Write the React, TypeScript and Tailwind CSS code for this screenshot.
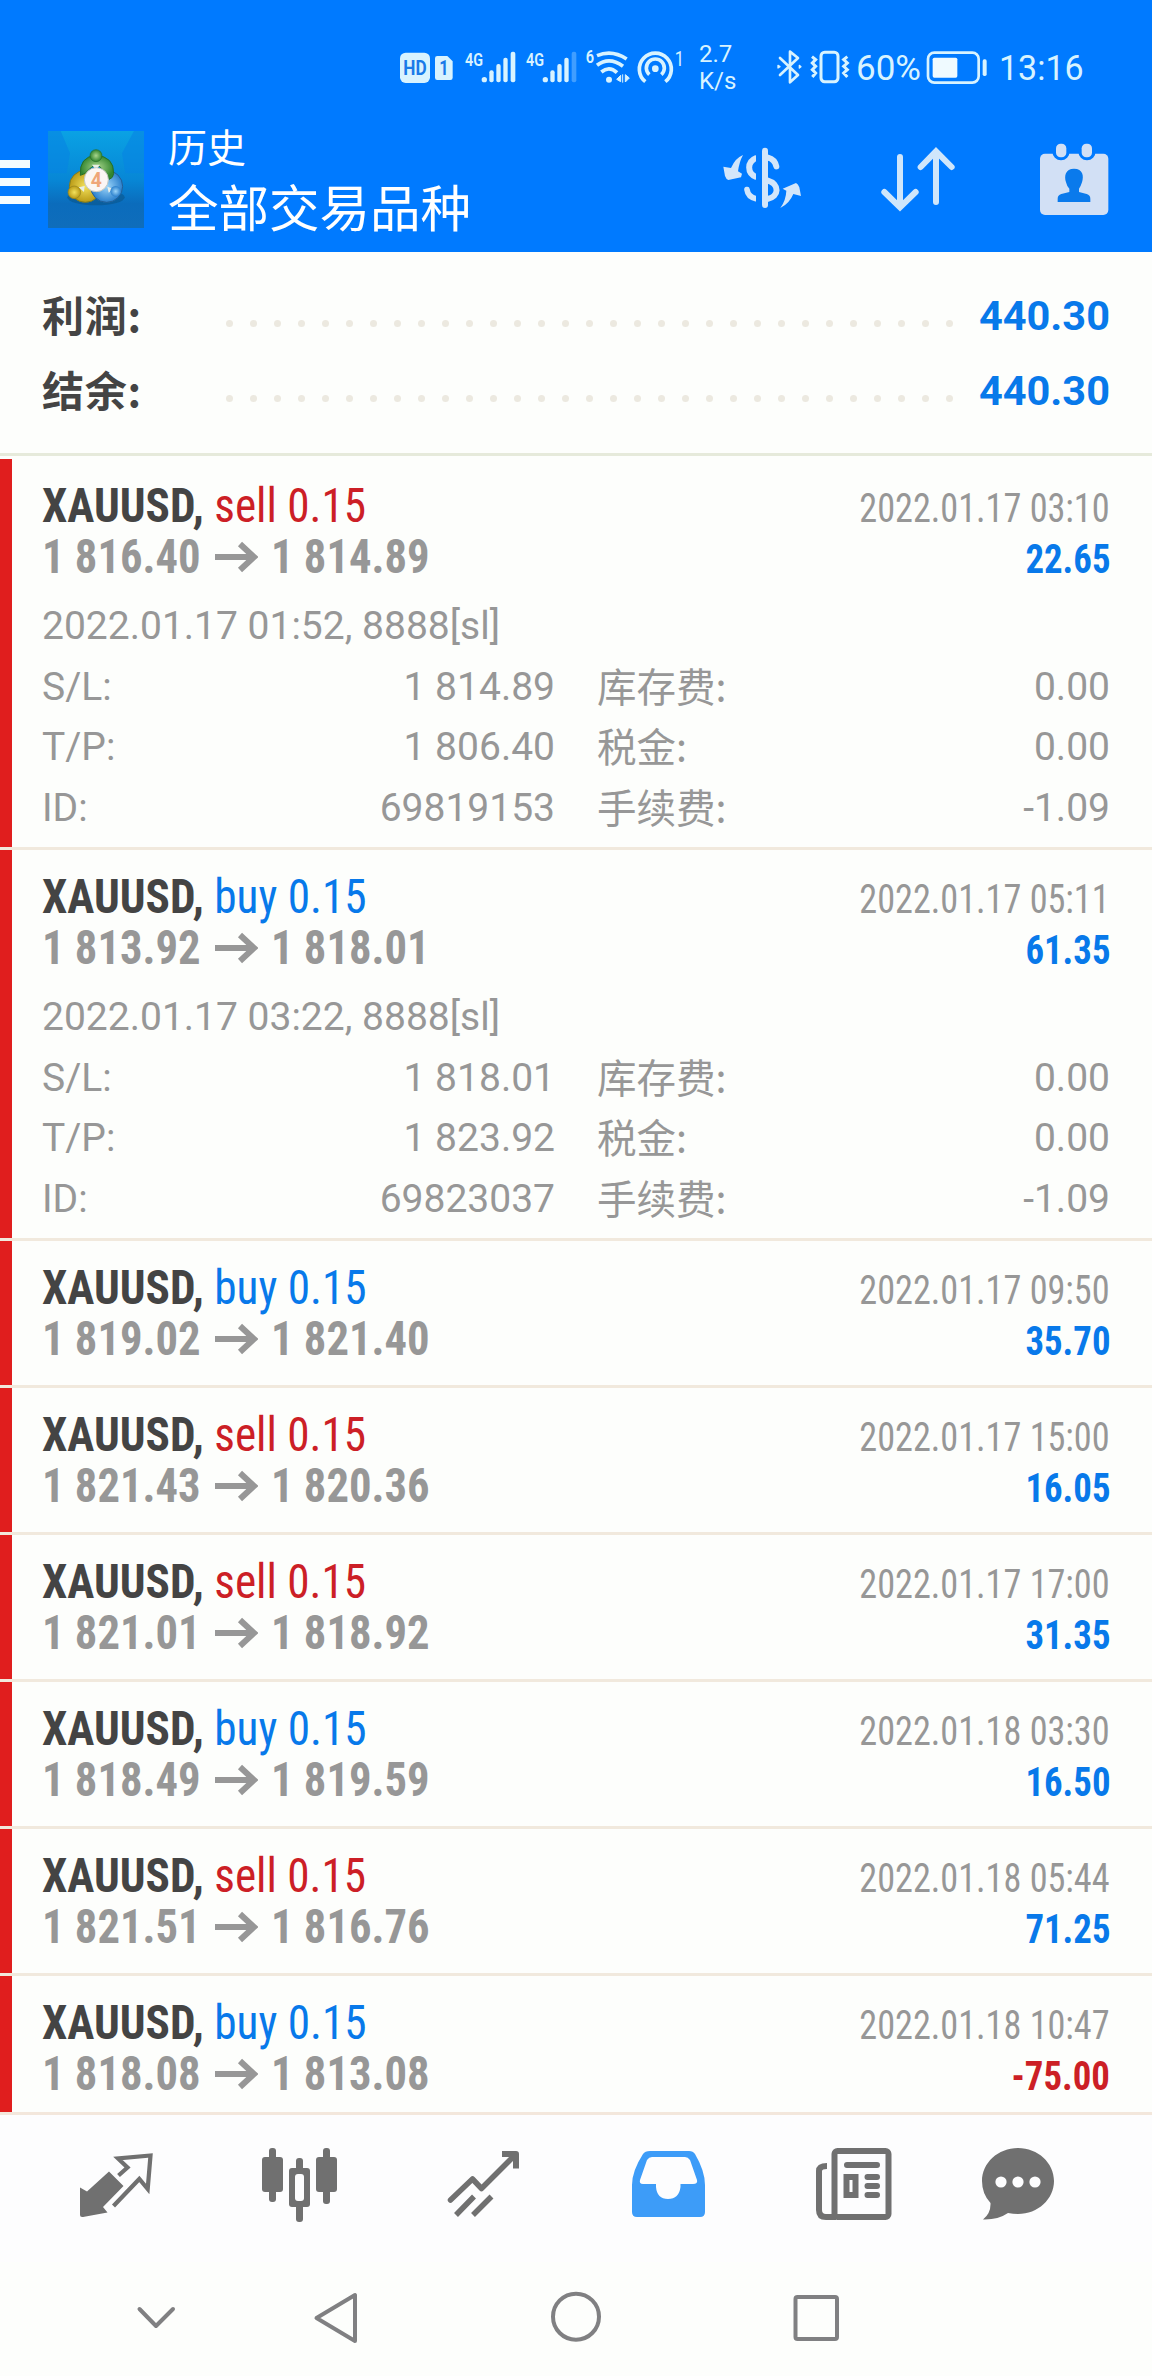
import React from "react";

type Detail = { opened: string; sl: string; tp: string; id: string; swap: string; tax: string; fee: string };
type Deal = { side: "buy" | "sell"; from: string; to: string; time: string; profit: string; detail?: Detail };

const deals: Deal[] = [
  {
    side: "sell", from: "1 816.40", to: "1 814.89", time: "2022.01.17 03:10", profit: "22.65",
    detail: { opened: "2022.01.17 01:52, 8888[sl]", sl: "1 814.89", tp: "1 806.40", id: "69819153", swap: "0.00", tax: "0.00", fee: "-1.09" },
  },
  {
    side: "buy", from: "1 813.92", to: "1 818.01", time: "2022.01.17 05:11", profit: "61.35",
    detail: { opened: "2022.01.17 03:22, 8888[sl]", sl: "1 818.01", tp: "1 823.92", id: "69823037", swap: "0.00", tax: "0.00", fee: "-1.09" },
  },
  { side: "buy", from: "1 819.02", to: "1 821.40", time: "2022.01.17 09:50", profit: "35.70" },
  { side: "sell", from: "1 821.43", to: "1 820.36", time: "2022.01.17 15:00", profit: "16.05" },
  { side: "sell", from: "1 821.01", to: "1 818.92", time: "2022.01.17 17:00", profit: "31.35" },
  { side: "buy", from: "1 818.49", to: "1 819.59", time: "2022.01.18 03:30", profit: "16.50" },
  { side: "sell", from: "1 821.51", to: "1 816.76", time: "2022.01.18 05:44", profit: "71.25" },
  { side: "buy", from: "1 818.08", to: "1 813.08", time: "2022.01.18 10:47", profit: "-75.00" },
];

function Signal({ dim }: { dim?: boolean }) {
  return (
    <svg className="h-20 w-[54px]" viewBox="250 0 162 240" fill="#d8f3ff">
      <text x="256" y="107" fontSize="56" fontWeight="600" textLength="54" lengthAdjust="spacingAndGlyphs">4G</text>
      <circle cx="314" cy="149" r="8" />
      <rect x="329" y="121" width="13" height="36" rx="6" />
      <rect x="350" y="102" width="13" height="55" rx="6" />
      <rect x="371" y="83" width="13" height="74" rx="6" />
      <rect x="393" y="65" width="14" height="92" rx="6" opacity={dim ? 0.3 : 1} />
    </svg>
  );
}

function StatusBar() {
  return (
    <div className="flex h-20 items-start pl-[398px] text-[#d8f3ff]">
      <svg className="h-20 w-[57px]" viewBox="54 0 171 240" fill="#d8f3ff">
        <rect x="60" y="68" width="90" height="91" rx="17" />
        <text x="70" y="134" fontSize="58" fontWeight="700" fill="#1a7ae8" textLength="70" lengthAdjust="spacingAndGlyphs">HD</text>
        <path d="M172 78H202L218 94V143Q218 150 211 150H172Q165 150 165 143V85Q165 78 172 78Z" />
        <text x="178" y="135" fontSize="58" fontWeight="700" fill="#1a7ae8" textLength="28" lengthAdjust="spacingAndGlyphs">1</text>
      </svg>
      <div className="w-[8px]" />
      <Signal />
      <div className="w-[7px]" />
      <Signal dim />
      <div className="w-[6px]" />
      <svg className="h-20 w-[48px]" viewBox="612 0 144 240" fill="none" stroke="#d8f3ff" strokeWidth="11">
        <text x="617" y="98" fontSize="54" fontWeight="600" fill="#d8f3ff" stroke="none" textLength="25" lengthAdjust="spacingAndGlyphs">6</text>
        <path d="M651 77Q696 58 740 87" strokeLinecap="butt" />
        <path d="M651 106Q688 78 729 109" />
        <path d="M664 126Q688 106 711 128" />
        <circle cx="687" cy="149" r="9" fill="#d8f3ff" stroke="none" />
        <path d="M710 148L722 136V155ZM748 144L736 134V156Z M728 133V158" fill="#d8f3ff" strokeWidth="3" />
      </svg>
      <div className="w-[2px]" />
      <svg className="h-20 w-[52px]" viewBox="762 0 156 240" fill="none" stroke="#d8f3ff" strokeWidth="11">
        <path d="M796 155A48 48 0 1 1 856 155" />
        <path d="M808 134A27 27 0 1 1 844 134" />
        <circle cx="826" cy="116" r="10" fill="#d8f3ff" stroke="none" />
        <text x="884" y="107" fontSize="58" fill="#d8f3ff" stroke="none" textLength="28" lengthAdjust="spacingAndGlyphs">1</text>
      </svg>
      <div className="ml-[13px] w-[62px] pt-[11px] text-[24px] leading-[27px]">
        <div>2.7</div>
        <div>K/s</div>
      </div>
      <svg className="ml-[15px] h-20 w-[28px]" viewBox="50 0 84 240" fill="none" stroke="#d8f3ff" strokeWidth="8" strokeLinejoin="round" strokeLinecap="round">
        <path d="M62 84L116 135L92 157V65L116 84L62 135" />
        <path d="M56 106L62 110L56 114ZM120 106L125 110L120 114Z" strokeWidth="4" />
      </svg>
      <svg className="ml-[5px] h-20 w-[42px]" viewBox="148 0 126 240" fill="none" stroke="#d8f3ff" strokeWidth="9">
        <rect x="184" y="67" width="51" height="88" rx="11" />
        <path d="M157 80L168 89L158 99L168 109L158 119L168 129L158 141M263 80L252 89L263 99L252 109L263 119L252 129L263 141" strokeWidth="9" />
      </svg>
      <div className="ml-[5px] mt-[18px] w-[67px] text-[35px] leading-[42px]">60%</div>
      <svg className="ml-[3px] h-20 w-[64px]" viewBox="500 0 192 240" fill="none" stroke="#d8f3ff" strokeWidth="8">
        <rect x="506" y="68" width="152" height="90" rx="19" />
        <rect x="520" y="83" width="74" height="60" rx="5" fill="#effaff" stroke="none" />
        <rect x="670" y="88" width="12" height="50" rx="5" fill="#d8f3ff" stroke="none" />
      </svg>
      <div className="ml-[9px] mt-[18px] origin-left scale-x-[0.97] text-[35px] leading-[42px]">13:16</div>
    </div>
  );
}

function Logo() {
  return (
    <svg className="ml-[18px] mt-[21px] h-[97px] w-24" viewBox="144 63 288 291">
      <defs>
        <linearGradient id="tile" x1="0" y1="0" x2="0" y2="1">
          <stop offset="0" stopColor="#0aa2e4" />
          <stop offset="0.5" stopColor="#0787d6" />
          <stop offset="0.75" stopColor="#0b6cbc" />
          <stop offset="1" stopColor="#0f6dbb" />
        </linearGradient>
        <radialGradient id="green"><stop offset="0" stopColor="#a9d68d" /><stop offset="1" stopColor="#32852f" /></radialGradient>
        <radialGradient id="gold"><stop offset="0" stopColor="#f3e15c" /><stop offset="1" stopColor="#b99a16" /></radialGradient>
        <radialGradient id="blue"><stop offset="0" stopColor="#9bd5fa" /><stop offset="1" stopColor="#2a7fcc" /></radialGradient>
      </defs>
      <rect x="144" y="63" width="288" height="291" fill="url(#tile)" />
      <path d="M144 63H182L210 130L200 190H144ZM432 63H402L366 130L376 190H432Z" fill="#0784e2" opacity="0.6" />
      <ellipse cx="288" cy="262" rx="86" ry="24" fill="#0a4f80" opacity="0.5" />
      <circle cx="256" cy="229" r="48" fill="url(#gold)" stroke="#7e7a20" strokeWidth="3" />
      <circle cx="320" cy="229" r="48" fill="url(#blue)" stroke="#215f98" strokeWidth="3" />
      <path d="M241 196Q237 140 288 136Q342 140 341 190Q340 204 328 208L300 170H276L256 190Z" fill="url(#green)" stroke="#25702b" strokeWidth="3" />
      <path d="M276 164H300L288 180ZM236 232L254 228L252 246ZM322 230L340 236L326 248Z" fill="#e8efe8" />
      <circle cx="288" cy="137" r="18" fill="url(#green)" stroke="#276f2b" strokeWidth="2" />
      <circle cx="223" cy="247" r="19" fill="url(#gold)" stroke="#94821c" strokeWidth="2" />
      <circle cx="347" cy="244" r="16" fill="url(#blue)" />
      <circle cx="289" cy="209" r="36" fill="#fbf6f4" stroke="#c3c8c4" strokeWidth="3" />
      <text x="289" y="230" textAnchor="middle" fontSize="58" fontWeight="700" fill="#efa678">4</text>
    </svg>
  );
}

function Header() {
  return (
    <header className="h-[252px] bg-[#007aff] pt-[30px]">
      <StatusBar />
      <div className="flex h-[142px]">
        <div className="flex w-[30px] flex-col gap-[10px] pt-[50px]">
          <div className="h-2 bg-[#f4fcff]" />
          <div className="h-2 bg-[#f4fcff]" />
          <div className="h-2 bg-[#f4fcff]" />
        </div>
        <Logo />
        <div className="ml-[24px] w-[552px] text-white">
          <div className="mt-[15px] text-[39px] leading-[48px]">历史</div>
          <div className="mt-[7px] text-[50.5px] leading-[60px]">全部交易品种</div>
        </div>
        <svg className="mt-[30px] h-[75px] w-[84px]" viewBox="120 90 252 225" fill="#d3e6fa">
          <path d="M189 135Q166 144 153 174L130 170L135 198Q138 207 145 210L183 202L186 191L174 184Q178 155 189 135Z" />
          <path d="M301 294Q328 281 340 252L363 258L358 232Q354 222 348 219L308 236L319 242Q318 270 301 294Z" />
          <g fill="none" stroke="#d3e6fa" strokeWidth="18">
            <path d="M230 143C200 155 200 190 230 202" />
            <path d="M201 239Q204 261 228 266" strokeLinecap="round" strokeWidth="17" />
            <path d="M264 143Q284 148 289 169" strokeLinecap="round" />
            <path d="M262 211C300 222 298 261 262 267" />
          </g>
          <path d="M228 128H246V280H228Z" fill="#007aff" />
          <rect x="246" y="113" width="18" height="181" rx="9" />
        </svg>
        <svg className="ml-[72px] mt-[30px] h-[75px] w-[84px]" viewBox="588 90 252 225" fill="none" stroke="#cfe6fb" strokeWidth="18" strokeLinecap="round">
          <path d="M660 141V290M613 246L660 292L707 246" />
          <path d="M768 276V126M722 171L768 124L815 171" />
        </svg>
        <svg className="ml-[72px] mt-[30px] h-[78px] w-[84px]" viewBox="1056 90 252 234" fill="#d2e0f5">
          <rect x="1080" y="131" width="205" height="184" rx="15" />
          <ellipse cx="1143" cy="124" rx="26" ry="27" fill="#007aff" />
          <ellipse cx="1221" cy="124" rx="26" ry="27" fill="#007aff" />
          <rect x="1128" y="101" width="31" height="41" rx="14" />
          <rect x="1205" y="101" width="31" height="41" rx="14" />
          <path d="M1182 176C1209 176 1212 198 1206 217Q1202 230 1197 236V246L1220 252Q1231 256 1231 266V276H1133V266Q1133 256 1144 252L1168 246V236Q1161 230 1158 217C1152 198 1156 176 1182 176Z" fill="#0a7aec" />
        </svg>
      </div>
    </header>
  );
}

function SummaryRow({ label, value }: { label: string; value: string }) {
  return (
    <div className="flex h-[75px] items-start pl-[42px] pr-[42px] text-[41.5px] font-bold leading-[75px]">
      <div className="w-[184px] font-['Noto_Sans_CJK_SC',sans-serif] text-[42px] leading-[71px] tracking-[0.7px] text-[#444]">{label}</div>
      <div className="flex gap-[17px] pt-[42px]">
        {Array.from({ length: 31 }, (_, i) => (
          <div key={i} className="size-[7px] rounded-full bg-[#ece9e0]" />
        ))}
      </div>
      <div className="ml-auto text-[#0879ea]">{value}</div>
    </div>
  );
}

function DetailLine({ a, av, b, bv }: { a: string; av: string; b: string; bv: string }) {
  return (
    <div className="flex h-[60.67px]">
      <div className="w-[200px]">{a}</div>
      <div className="w-[313px] text-right">{av}</div>
      <div className="ml-[42px] grow font-['Noto_Sans_CJK_SC',sans-serif] text-[39.5px] leading-[56px]">{b}</div>
      <div>{bv}</div>
    </div>
  );
}

function DealRow({ deal, last }: { deal: Deal; last: boolean }) {
  const d = deal.detail;
  return (
    <div className={last ? "flex h-[136px] overflow-hidden" : d ? "flex h-[391px] border-b-[3px] border-[#f1e9dd]" : "flex h-[147px] border-b-[3px] border-[#f1e9dd]"}>
      <div className="w-3 shrink-0 bg-[#e01e1e]" />
      <div className="grow pl-[30px] pr-[42px] pt-[21px]">
        <div className="font-['Roboto_Condensed',Roboto,sans-serif] [font-stretch:75%]">
          <div className="flex h-[51px] items-baseline justify-between text-[48px] leading-[51px]">
            <div className="origin-left scale-x-[0.942] whitespace-pre">
              <span className="font-bold text-[#444]">XAUUSD, </span>
              <span className={deal.side === "buy" ? "text-[#0879ea]" : "text-[#cc1f26]"}>{deal.side} 0.15</span>
            </div>
            <div className="origin-right scale-x-[0.905] text-[40px] text-[#979797]">{deal.time}</div>
          </div>
          <div className="flex h-[51px] items-baseline justify-between text-[48px] font-bold leading-[51px] text-[#979797]">
            <div className="flex items-baseline">
              <div className="w-[172px] whitespace-nowrap"><div className="origin-left scale-x-[0.93]">{deal.from}</div></div>
              <svg className="h-[32px] w-[44px]" viewBox="0 0 44 32" fill="none" stroke="#979797" strokeWidth="6">
                <path d="M1 16H40M26 3L40 16L26 29" />
              </svg>
              <div className="ml-[12.5px] origin-left scale-x-[0.93]">{deal.to}</div>
            </div>
            <div className={deal.profit.startsWith("-") ? "origin-right scale-x-[0.92] text-[40px] text-[#cc1f26]" : "origin-right scale-x-[0.92] text-[40px] text-[#0879ea]"}>{deal.profit}</div>
          </div>
        </div>
        {d && (
          <div className="mt-[14px] text-[39px] leading-[60.67px] text-[#979797]">
            <div className="h-[60.67px]">{d.opened}</div>
            <DetailLine a="S/L:" av={d.sl} b="库存费:" bv={d.swap} />
            <DetailLine a="T/P:" av={d.tp} b="税金:" bv={d.tax} />
            <DetailLine a="ID:" av={d.id} b="手续费:" bv={d.fee} />
          </div>
        )}
      </div>
    </div>
  );
}

function TabBar() {
  return (
    <nav className="flex h-[150px] border-t-[3px] border-[#f3e7dc] bg-[#fdfdfe] pl-[70px]">
      <svg className="h-[147px] w-[92px]" viewBox="70 2115 92 147">
        <path d="M80 2187.5L87 2191.5L109 2171.5L123.5 2186L103 2207L107.5 2212.5L83 2217Q80 2217.5 80 2215Z" fill="#707070" />
        <path d="M118.5 2175.5L127.5 2167.5L118 2158.5L150.5 2155.5L147.7 2189L139.3 2179L113.5 2206" fill="none" stroke="#707070" strokeWidth="4.2" />
      </svg>
      <svg className="ml-[92px] h-[147px] w-[92px]" viewBox="254 2115 92 147" fill="#707070">
        <rect x="262" y="2157" width="21" height="35" rx="3" />
        <rect x="269" y="2148" width="7" height="54" rx="3" />
        <rect x="316" y="2157" width="21" height="35" rx="3" />
        <rect x="323" y="2148" width="7" height="56" rx="3" />
        <rect x="296" y="2158" width="7" height="64" rx="3" />
        <rect x="289" y="2168" width="21" height="39" rx="3" />
        <rect x="295" y="2174" width="9" height="27" rx="3" fill="#fdfdfe" />
      </svg>
      <svg className="ml-[92px] h-[147px] w-[92px]" viewBox="438 2115 92 147" fill="none" stroke="#707070" strokeWidth="5.5" strokeLinejoin="round">
        <path d="M450.5 2200L472.5 2179L481.5 2188.5L515 2155" strokeLinecap="round" />
        <path d="M502 2154H516V2168.5" strokeWidth="6" />
        <path d="M456 2215L474 2196.5M473 2215L491.5 2196.5" />
      </svg>
      <svg className="ml-[92px] h-[147px] w-[92px]" viewBox="622 2115 92 147">
        <path fillRule="evenodd" fill="#3d9cf8" d="M650 2151H689Q693 2151 695 2154Q705 2171 705 2185V2212Q705 2217 700 2217H637Q632 2217 632 2212V2185Q632 2171 643 2154Q645 2151 650 2151ZM652 2157Q649 2157 647 2160L640 2180Q639 2184 643 2184H656V2187Q657 2199 668 2199Q679 2199 680.5 2187V2184H693Q698 2184 697 2180L690 2160Q688 2157 685 2157Z" />
      </svg>
      <svg className="ml-[94px] h-[147px] w-[92px]" viewBox="808 2115 92 147" fill="none" stroke="#707070" strokeWidth="6">
        <rect x="834.5" y="2151" width="54" height="66" rx="3" />
        <path d="M827 2166Q819 2166 819 2171V2210Q819 2217 826 2217H836" />
        <path d="M847 2165H877M867.5 2177H877M867.5 2186H877M867.5 2195H877" strokeLinecap="round" />
        <rect x="846.5" y="2177" width="9" height="18" />
      </svg>
      <svg className="ml-[72px] h-[147px] w-[92px]" viewBox="972 2115 92 147">
        <path d="M1018 2148C1038 2148 1054 2163 1054 2181S1038 2214 1018 2214Q1013 2214 1008 2213Q998 2220 983 2219.5Q991 2213 990.5 2203Q982 2194 982 2181C982 2163 998 2148 1018 2148Z" fill="#707070" />
        <circle cx="1001" cy="2182" r="5.6" fill="#fdfdfe" />
        <circle cx="1018" cy="2182" r="5.6" fill="#fdfdfe" />
        <circle cx="1035" cy="2182" r="5.6" fill="#fdfdfe" />
      </svg>
    </nav>
  );
}

function SystemNav() {
  return (
    <div className="flex h-[114px] pl-[126px]">
      <svg className="h-[114px] w-[60px]" viewBox="126 2262 60 114" fill="none" stroke="#808082" strokeWidth="4" strokeLinecap="round" strokeLinejoin="round">
        <path d="M139.5 2309L156 2326L173 2309" />
      </svg>
      <svg className="ml-[120px] h-[114px] w-[60px]" viewBox="306 2262 60 114" fill="none" stroke="#808082" strokeWidth="4" strokeLinejoin="round">
        <path d="M316.5 2318L355 2295V2341Z" />
      </svg>
      <svg className="ml-[180px] h-[114px] w-[60px]" viewBox="546 2262 60 114" fill="none" stroke="#808082" strokeWidth="4">
        <circle cx="576" cy="2316.7" r="23" />
      </svg>
      <svg className="ml-[180px] h-[114px] w-[60px]" viewBox="786 2262 60 114" fill="none" stroke="#808082" strokeWidth="4">
        <rect x="795.5" y="2297" width="41.5" height="42" rx="2" />
      </svg>
    </div>
  );
}

export default function App() {
  return (
    <div className="flex h-[2376px] w-[1152px] flex-col overflow-hidden bg-[#fdfefc] font-[Roboto,'Noto_Sans_CJK_SC',sans-serif]">
      <Header />
      <section className="h-[204px] border-b-[3px] border-[#e6eadb] pt-[26px]">
        <SummaryRow label="利润:" value="440.30" />
        <SummaryRow label="结余:" value="440.30" />
      </section>
      <main className="pt-[3px]">
        {deals.map((deal, i) => (
          <DealRow key={deal.time} deal={deal} last={i === deals.length - 1} />
        ))}
      </main>
      <TabBar />
      <SystemNav />
    </div>
  );
}
